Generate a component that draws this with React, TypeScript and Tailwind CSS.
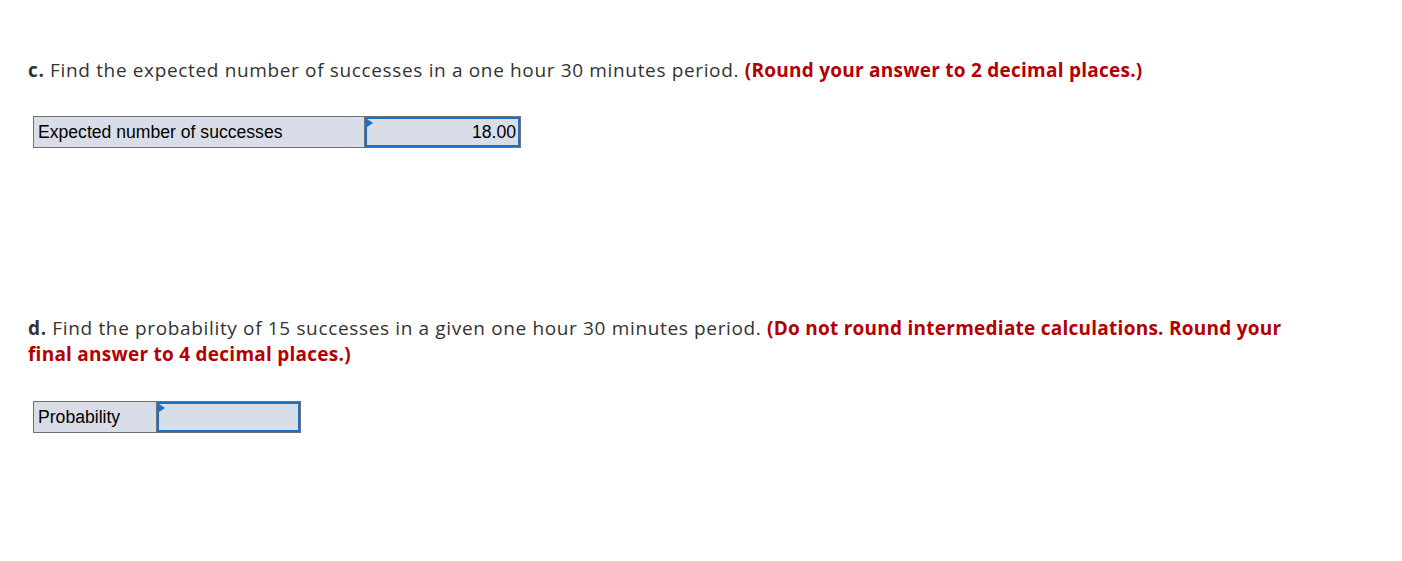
export default function App() {
  return (
    <div className="min-h-[561px] bg-white pl-[28px] pt-[57px] font-['Open_Sans',sans-serif] text-[#333]">
      <p className="text-[19px] leading-[26px] tracking-[0.65px]">
        <b className="font-bold">c.</b> Find the expected number of successes in a one hour 30 minutes period.{" "}
        <b className="font-bold tracking-[0.25px] text-[#b30000]">(Round your answer to 2 decimal places.)</b>
      </p>

      <div className="ml-[5px] mt-[33px] flex h-[32px] w-[488px] border border-[#707070] bg-[#d9dde8] font-['Liberation_Sans',Arial,sans-serif] text-[17.6px] text-black">
        <div className="flex w-[331px] items-center border-r border-[#707070] pl-[4px]">Expected number of successes</div>
        <div className="relative flex flex-1 items-center justify-end border-2 border-[#1a6fc9] pr-[2px]">
          18.00
          <span className="absolute left-0 top-0 h-0 w-0 border-y-[4px] border-l-[6px] border-y-transparent border-l-[#1a6fc9]" />
        </div>
      </div>

      <p className="mt-[167px] w-[1300px] text-[19px] leading-[26px] tracking-[0.65px]">
        <b className="font-bold">d.</b> Find the probability of 15 successes in a given one hour 30 minutes period.{" "}
        <b className="font-bold tracking-[0.25px] text-[#b30000]">
          (Do not round intermediate calculations. Round your final answer to 4 decimal places.)
        </b>
      </p>

      <div className="ml-[5px] mt-[34px] flex h-[32px] w-[268px] border border-[#707070] bg-[#d9dde8] font-['Liberation_Sans',Arial,sans-serif] text-[17.6px] text-black">
        <div className="flex w-[123px] items-center border-r border-[#707070] pl-[4px]">Probability</div>
        <div className="relative flex-1 border-2 border-[#1a6fc9]">
          <span className="absolute left-0 top-0 h-0 w-0 border-y-[4px] border-l-[6px] border-y-transparent border-l-[#1a6fc9]" />
        </div>
      </div>
    </div>
  );
}
